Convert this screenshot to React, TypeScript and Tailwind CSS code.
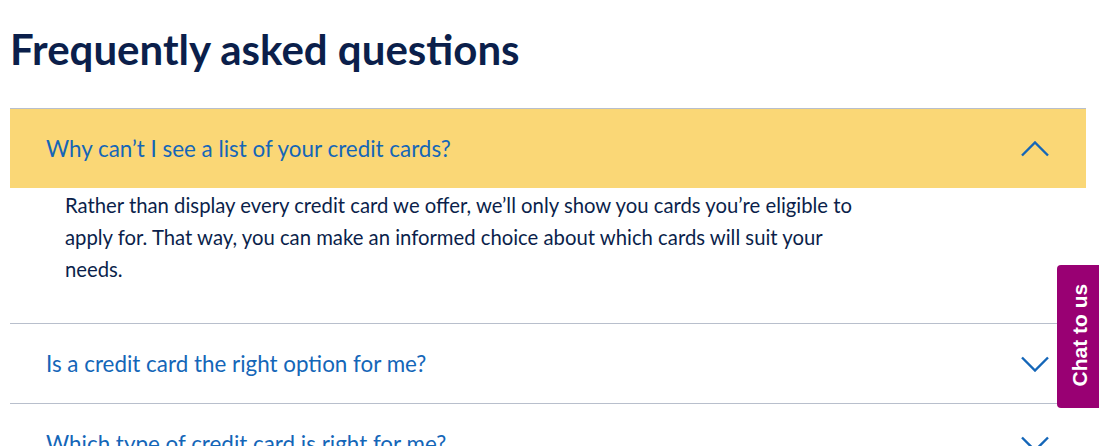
import React from "react";

const Chevron = ({ up }: { up?: boolean }) => (
  <svg width="28" height="16" viewBox="0 0 28 16" fill="none" className="shrink-0">
    {up ? (
      <path d="M1 14.5 L14 1.5 L27 14.5" stroke="#1466b8" strokeWidth="2.4" />
    ) : (
      <path d="M1 1.5 L14 14.5 L27 1.5" stroke="#1466b8" strokeWidth="2.4" />
    )}
  </svg>
);

export default function App() {
  const font = { fontFamily: "Lato, 'Open Sans', sans-serif" };
  return (
    <div className="relative w-[1099px] h-[446px] overflow-hidden bg-white" style={font}>
      <div className="pl-[10px] w-[1086px]">
        <h1 className="pt-[23px] h-[108px] text-[42px] leading-[52px] font-bold text-[#0b1f4b]">
          Frequently asked questions
        </h1>
        <div className="border-t border-[#b8bfcc]">
          <div className="h-[79px] bg-[#fad776] flex items-center justify-between pl-[36px] pr-[37px]">
            <span className="text-[22.4px] text-[#1466b8]">Why can’t I see a list of your credit cards?</span>
            <Chevron up />
          </div>
          <div className="h-[135px] pl-[55px] pt-[1px]">
            <p className="w-[810px] text-[20.3px] leading-[32px] text-[#0b1f4b]">
              Rather than display every credit card we offer, we’ll only show you cards you’re eligible to apply for. That way, you can make an informed choice about which cards will suit your needs.
            </p>
          </div>
        </div>
        <div className="border-t border-[#b8bfcc] h-[80px] flex items-center justify-between pl-[36px] pr-[37px]">
          <span className="text-[22.4px] text-[#1466b8]">Is a credit card the right option for me?</span>
          <Chevron />
        </div>
        <div className="border-t border-[#b8bfcc] h-[80px] flex items-center justify-between pl-[36px] pr-[37px]">
          <span className="text-[22.4px] text-[#1466b8]">Which type of credit card is right for me?</span>
          <Chevron />
        </div>
      </div>
      <div className="absolute left-[1057px] top-[265px] w-[50px] h-[143px] bg-[#990073] rounded-l-[4px] flex items-center pl-[12px]">
        <span
          className="block text-white font-bold text-[21px] leading-[21px] whitespace-nowrap -rotate-90 origin-center -ml-[40px] w-[100px] text-center"
          style={{ fontFamily: "'Liberation Sans', Arial, sans-serif" }}
        >
          Chat to us
        </span>
      </div>
    </div>
  );
}
